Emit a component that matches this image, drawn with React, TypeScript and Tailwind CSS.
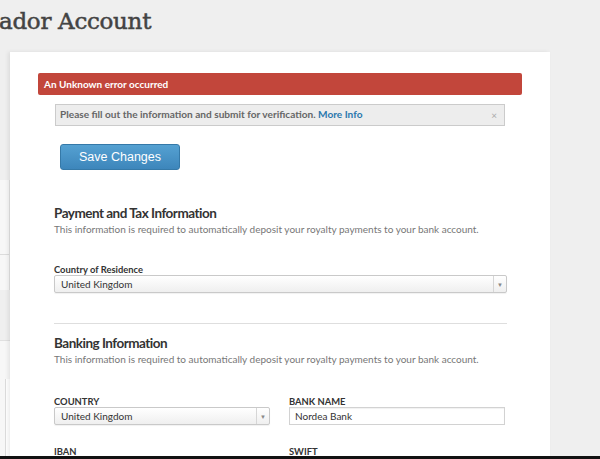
import React from "react";

const lato = { fontFamily: "Lato, 'Open Sans', sans-serif" };

const SelectBox = ({ value, width }: { value: string; width: string }) => (
  <div
    className={`${width} h-[18px] flex items-center justify-between rounded-[2px] border border-[#c9c9c9] bg-gradient-to-b from-white to-[#efefef] shadow-[0_1px_1px_rgba(0,0,0,0.06)]`}
  >
    <span className="pl-[6px] text-[10px] text-[#333]">{value}</span>
    <span className="w-[13px] h-full flex items-center justify-center border-l border-[#d6d6d6] text-[6px] text-[#888]">
      ▼
    </span>
  </div>
);

const Label = ({ children }: { children: React.ReactNode }) => (
  <div className="text-[9.4px] font-bold text-[#333] leading-[9px] mb-[1px]">{children}</div>
);

const SectionHead = ({ title, mt }: { title: string; mt: string }) => (
  <>
    <h2 className={`${mt} text-[13.5px] font-bold text-[#333] leading-[18px] tracking-[-0.5px]`}>{title}</h2>
    <p className="mt-[1px] text-[10px] text-[#777] leading-[12px]">
      This information is required to automatically deposit your royalty payments to your bank account.
    </p>
  </>
);

export default function App() {
  return (
    <div className="relative h-[459px] w-[600px] overflow-hidden bg-[#efefef]" style={lato}>
      {/* page title */}
      <div className="h-[52px] pt-[5px]">
        <h1
          className="ml-[-1px] text-[23px] leading-[32px] text-[#434343] tracking-[-0.3px] [-webkit-text-stroke:0.5px_#434343]"
          style={{ fontFamily: "'DejaVu Serif', serif" }}
        >
          ador Account
        </h1>
      </div>

      <div className="flex">
        {/* sidebar peeking from the left */}
        <div className="w-[10px] flex flex-col">
          <div className="h-[128px]" />
          <div className="h-[110px] bg-[#f7f7f7] border-r border-[#e2e2e2] flex flex-col">
            <div className="h-[74px]" />
            <div className="border-t border-[#dcdcdc]" />
          </div>
          <div className="h-[50px]" />
          <div className="flex-1 bg-[#f7f7f7] border-t border-[#e0e0e0] pl-[5px]">
            <div className="mt-[38px] h-[200px] border-l border-[#dcdcdc] bg-white" />
          </div>
        </div>

        {/* main panel */}
        <div className="w-[540px] h-[420px] bg-white shadow-[-2px_0_4px_rgba(0,0,0,0.08)] pt-[21px] pl-[28px]">
          <div className="w-[484px] h-[22px] rounded-[2px] bg-[#c2463b] flex items-center pl-[6px] text-[10px] font-bold text-white">
            An Unknown error occurred
          </div>

          <div className="mt-[9px] ml-[17px] w-[450px] h-[22px] border border-[#cbcbcb] bg-[#ededed] flex items-center justify-between px-[4px] text-[10.1px] font-bold text-[#666]">
            <span>
              Please fill out the information and submit for verification.{" "}
              <span className="text-[#2a78ad]">More Info</span>
            </span>
            <span className="text-[10px] font-normal text-[#aaa] pr-[3px]">×</span>
          </div>

          <button
            className="mt-[18px] ml-[22px] w-[120px] h-[26px] rounded-[3px] border border-[#3579a8] bg-gradient-to-b from-[#55a1d2] to-[#3d86bb] text-[12.5px] text-white"
            style={{ fontFamily: "'Liberation Sans', Arial, sans-serif" }}
          >
            Save Changes
          </button>

          <div className="ml-[16px] w-[453px]">
            <SectionHead title="Payment and Tax Information" mt="mt-[34px]" />

            <div className="mt-[30px]">
              <Label>Country of Residence</Label>
              <SelectBox value="United Kingdom" width="w-[453px]" />
            </div>

            <div className="mt-[30px] border-t border-[#dedede]" />

            <SectionHead title="Banking Information" mt="mt-[10px]" />

            <div className="mt-[32px] flex gap-[19px]">
              <div>
                <Label>COUNTRY</Label>
                <SelectBox value="United Kingdom" width="w-[216px]" />
              </div>
              <div>
                <Label>BANK NAME</Label>
                <div className="w-[216px] h-[18px] flex items-center border border-[#d2d2d2] pl-[5px] text-[10px] text-[#333] shadow-[inset_0_1px_1px_rgba(0,0,0,0.06)]">
                  Nordea Bank
                </div>
              </div>
            </div>

            <div className="mt-[22px] flex gap-[19px]">
              <div className="w-[216px]">
                <Label>IBAN</Label>
              </div>
              <div className="w-[216px]">
                <Label>SWIFT</Label>
              </div>
            </div>
          </div>
        </div>
      </div>

      {/* bottom edge */}
      <div className="absolute left-0 right-0 bottom-0 h-[3px] bg-[#111]" />
    </div>
  );
}
